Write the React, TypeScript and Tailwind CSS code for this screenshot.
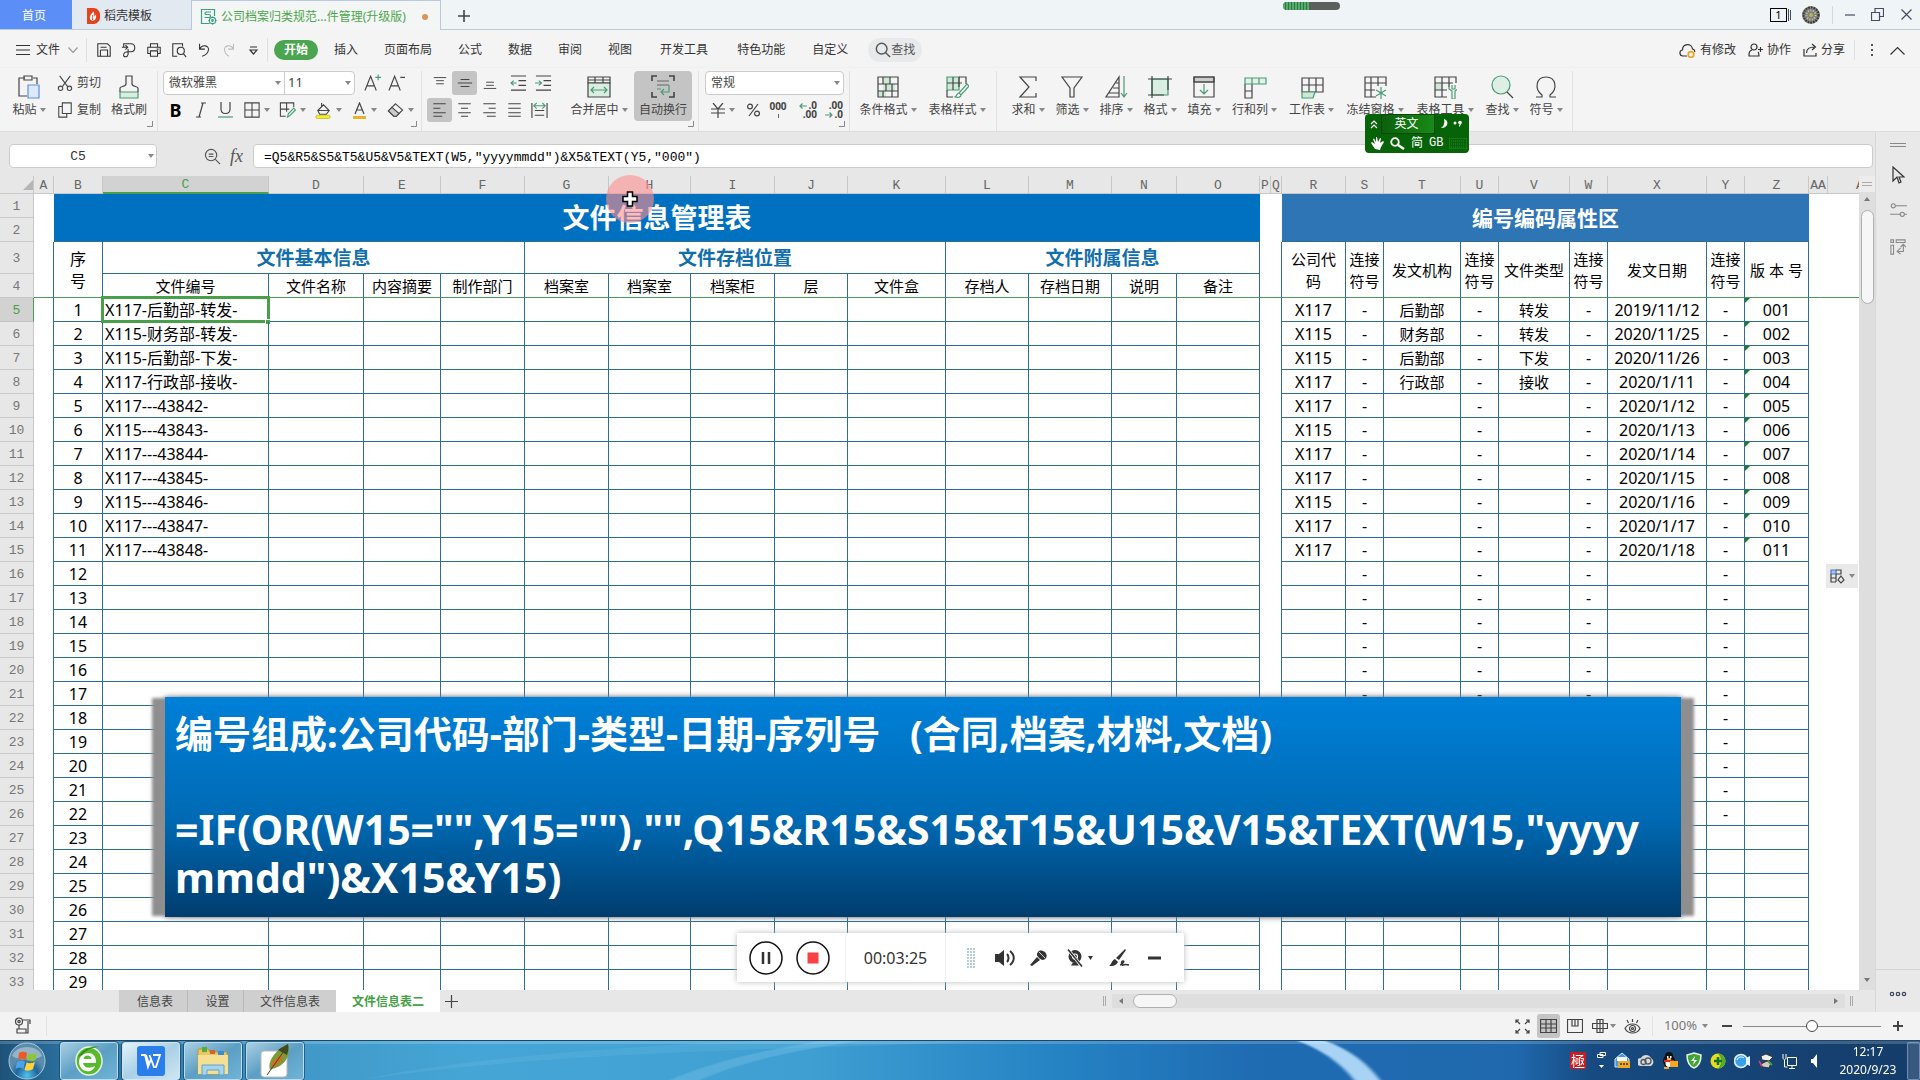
import React from 'react';

const columns = [
  { name: 'A', width: 20 },
  { name: 'B', width: 49 },
  { name: 'C', width: 166 },
  { name: 'D', width: 95 },
  { name: 'E', width: 77 },
  { name: 'F', width: 84 },
  { name: 'G', width: 84 },
  { name: 'H', width: 82 },
  { name: 'I', width: 84 },
  { name: 'J', width: 73 },
  { name: 'K', width: 98 },
  { name: 'L', width: 83 },
  { name: 'M', width: 83 },
  { name: 'N', width: 65 },
  { name: 'O', width: 83 },
  { name: 'P', width: 11 },
  { name: 'Q', width: 11 },
  { name: 'R', width: 64 },
  { name: 'S', width: 38 },
  { name: 'T', width: 77 },
  { name: 'U', width: 38 },
  { name: 'V', width: 71 },
  { name: 'W', width: 38 },
  { name: 'X', width: 99 },
  { name: 'Y', width: 38 },
  { name: 'Z', width: 64 },
  { name: 'AA', width: 19 },
];

const records = [
  { file: 'X117-后勤部-转发-', code: 'X117', dept: '后勤部', type: '转发', date: '2019/11/12', version: '001' },
  { file: 'X115-财务部-转发-', code: 'X115', dept: '财务部', type: '转发', date: '2020/11/25', version: '002' },
  { file: 'X115-后勤部-下发-', code: 'X115', dept: '后勤部', type: '下发', date: '2020/11/26', version: '003' },
  { file: 'X117-行政部-接收-', code: 'X117', dept: '行政部', type: '接收', date: '2020/1/11', version: '004' },
  { file: 'X117---43842-', code: 'X117', dept: '', type: '', date: '2020/1/12', version: '005' },
  { file: 'X115---43843-', code: 'X115', dept: '', type: '', date: '2020/1/13', version: '006' },
  { file: 'X117---43844-', code: 'X117', dept: '', type: '', date: '2020/1/14', version: '007' },
  { file: 'X117---43845-', code: 'X117', dept: '', type: '', date: '2020/1/15', version: '008' },
  { file: 'X115---43846-', code: 'X115', dept: '', type: '', date: '2020/1/16', version: '009' },
  { file: 'X117---43847-', code: 'X117', dept: '', type: '', date: '2020/1/17', version: '010' },
  { file: 'X117---43848-', code: 'X117', dept: '', type: '', date: '2020/1/18', version: '011' },
];

const subHeads = ['文件编号', '文件名称', '内容摘要', '制作部门', '档案室', '档案室', '档案柜', '层', '文件盒', '存档人', '存档日期', '说明', '备注'];
const codeHeads = ['公司代码', '连接符号', '发文机构', '连接符号', '文件类型', '连接符号', '发文日期', '连接符号', '版 本 号'];

const GREEN = '#4a9a76';

type IconProps = { w?: number; h?: number; box?: string; sw?: number; className?: string; children: React.ReactNode };

function Icon({ w = 18, h = 18, box = '0 0 18 18', sw = 1.2, className = '', children }: IconProps) {
  return (
    <svg width={w} height={h} viewBox={box} fill="none" stroke="currentColor" strokeWidth={sw} className={`shrink-0 ${className}`} aria-hidden="true">
      {children}
    </svg>
  );
}

function Caret() {
  return (
    <svg width="6" height="4" viewBox="0 0 6 4" className="shrink-0 text-[#888]" aria-hidden="true">
      <path d="M0 0h6L3 4z" fill="currentColor" />
    </svg>
  );
}

function Launcher() {
  return (
    <svg width="6" height="6" viewBox="0 0 6 6" className="absolute right-1 bottom-1 text-[#888]" aria-hidden="true">
      <path d="M5.500 0v5.500H0" stroke="currentColor" fill="none" />
    </svg>
  );
}

function TopTabs() {
  return (
    <header className="flex h-[30px] border-b border-[#b9cdd3] bg-[#eff4f6] text-xs">
      <button className="w-[72px] bg-[#5b8ff7] pt-[3px] pr-1 text-white">首页</button>
      <button className="flex w-[119px] items-center gap-1 bg-[#e3e9f1] pt-[3px] pl-[14px] text-[#333]">
        <svg width="14" height="16" viewBox="0 0 14 16" aria-hidden="true">
          <path d="M1 0h6a6.500 7 0 0 1 7 8 6.500 7 0 0 1-7 8H1z" fill="#e5431e" />
          <path d="M7.500 3.500c-3 2.500-4 5-3.500 7.500 1 2 4 2.500 5.500 0 1-2 .8-3.500.2-4.500-.6 1-1 1.500-1.700 1.700.4-1.700.3-3-.5-4.700z" fill="#fff" />
          <path d="M6.800 12c-1-2 0-3.500 0-5" stroke="#e5431e" fill="none" />
        </svg>
        稻壳模板
      </button>
      <div className="-mb-px flex w-[250px] items-center border-x border-t border-[#b9c8dd] bg-[#f4f5f5] pt-[2px] pl-[8px] text-[#4ca64c]">
        <Icon w={17} h={17} box="0 0 17 17" className="mr-1 text-[#35a27c]">
          <path d="M14.500 8V1.500h-13v14h8M11 4H6.500c-2 0-2 2.500 0 2.500h2.500c2 0 2 3 0 3H4.500" />
          <circle cx="12.500" cy="12.500" r="3.200" />
          <path d="M12.500 8.500v1M12.500 15.500v1M8.500 12.500h1M15.500 12.500h1" />
          <circle cx="12.500" cy="12.500" r=".8" />
        </Icon>
        <span className="whitespace-nowrap">公司档案归类规范...件管理(升级版)</span>
        <span className="mr-3 ml-auto size-[6px] rounded-full bg-[#dd9557]" />
      </div>
      <button aria-label="新建" className="ml-4 pt-[2px] text-[#444]">
        <Icon w={14} h={14} box="0 0 14 14" sw={1.6}><path d="M7 1v12M1 7h12" /></Icon>
      </button>
      <div className="ml-auto flex items-center pr-2 text-[#444c66]">
        <button aria-label="窗口数" className="mr-[11px] flex h-[14px] items-center gap-px">
          <span className="h-[14px] w-[17px] border border-current text-center text-[11px] leading-[12px] text-black">1</span>
          <span className="h-[12px] w-px bg-current" />
          <span className="h-[10px] w-px bg-current" />
        </button>
        <svg width="18" height="18" viewBox="0 0 18 18" className="mr-3" aria-hidden="true">
          <circle cx="9" cy="9" r="9" fill="#807f78" />
          <circle cx="9" cy="9" r="7.500" fill="none" stroke="#34342f" strokeWidth="2" strokeDasharray="1.500 1.200" />
          <circle cx="9" cy="9" r="4.500" fill="none" stroke="#c8c8bf" strokeWidth="2" strokeDasharray="1 1.500" />
          <circle cx="9" cy="9" r="2" fill="#b0b85a" />
        </svg>
        <span className="mr-3 h-[18px] w-px bg-[#d5d9da]" />
        <button aria-label="最小化" className="mr-4"><Icon w={10} h={12} box="0 0 10 12"><path d="M0 6h10" /></Icon></button>
        <button aria-label="还原" className="mr-[17px]"><Icon w={13} h={13} box="0 0 13 13"><path d="M.5 4.500h8v8h-8zM4 4.500v-4h8.500v8h-4" /></Icon></button>
        <button aria-label="关闭"><Icon w={11} h={11} box="0 0 11 11"><path d="M.5.5l10 10M10.500.5l-10 10" /></Icon></button>
      </div>
    </header>
  );
}

const menus = [
  { label: '插入', pad: 'px-[13px]' },
  { label: '页面布局', pad: 'px-[13px]' },
  { label: '公式', pad: 'px-[13px]' },
  { label: '数据', pad: 'px-[13px]' },
  { label: '审阅', pad: 'px-[13px]' },
  { label: '视图', pad: 'px-[13px]' },
  { label: '开发工具', pad: 'px-[15px]' },
  { label: '特色功能', pad: 'px-[14px]' },
  { label: '自定义', pad: 'px-[13px]' },
];

const quickIcons = [
  { label: '保存', draw: <path d="M2 2h11l3 3v11H2zM5 6h7M5 9h8v7M5 9v7" /> },
  { label: '输出为PDF', draw: <path d="M3 5.500V2h8c6 0 6 9 0 9H7M1 6h6M5 3.500L7.500 6 5 8.500M8 8v6c-1 4-6 3-5 0 .5-2 3-3 5-3" /> },
  { label: '打印', draw: <path d="M5 6V2h8v4M5 13H2V6h14v7h-3M5 10h8v6H5zM12 8h2" /> },
  { label: '打印预览', draw: <g><path d="M7 16H2V2h11v3" /><circle cx="11" cy="10" r="4" /><path d="M14 13l3 4" /></g> },
  { label: '撤销', draw: <path d="M4 2v6h6M4 8c3-6 11-4 10 1-.5 4-4 6-7 7" /> },
];

function MenuBar() {
  return (
    <nav className="flex h-[38px] items-center bg-[#f4f4f4] pt-[2px] pr-[15px] text-xs text-[#333]">
      <button className="flex items-center pl-4">
        <Icon w={14} h={12} box="0 0 14 12"><path d="M0 1.500h14M0 6h14M0 10.500h14" /></Icon>
        <span className="ml-[6px]">文件</span>
        <Icon w={10} h={6} box="0 0 10 6" className="ml-2 text-[#999]"><path d="M.5.5L5 5.500 9.500.5" /></Icon>
      </button>
      <span className="mr-1 ml-2 h-6 w-px bg-[#e0e0e0]" />
      {quickIcons.map((q) => (
        <button key={q.label} aria-label={q.label} className="flex w-[25px] justify-center"><Icon w={16} h={16}>{q.draw}</Icon></button>
      ))}
      <button aria-label="恢复" className="flex w-[25px] justify-center text-[#bbb]"><Icon w={16} h={16}><path d="M14 2v6H8M14 8C11 2 3 4 4 9c.5 4 3 6 5 7" /></Icon></button>
      <button aria-label="自定义快速访问" className="flex w-[25px] justify-center"><Icon w={9} h={9} box="0 0 9 9"><path d="M1 1h7M1 4l3.500 4L8 4z" /></Icon></button>
      <span className="mr-[6px] ml-px h-6 w-px bg-[#e0e0e0]" />
      <button className="mr-[3px] h-5 w-11 rounded-full bg-[#4ba54f] font-bold text-white">开始</button>
      {menus.map((m) => (
        <button key={m.label} className={m.pad}>{m.label}</button>
      ))}
      <button className="ml-[7px] flex h-6 items-center rounded-full bg-[#e7e9ea] px-[7px] text-[#555]">
        <Icon w={16} h={16} sw={1.6}><circle cx="7.500" cy="7.500" r="6" /><path d="M12 12l5 5" /></Icon>
        查找
      </button>
      <div className="ml-auto flex items-center">
        <button className="flex items-center gap-1">
          <Icon w={17} h={15} box="0 0 17 15">
            <path d="M8 13H4C0 13 0 7 3.500 7 3.500 0 13 0 13.500 6c2 .5 2.500 2 2 3" />
            <circle cx="12" cy="11.500" r="2.800" stroke="#eaa52b" strokeWidth="1.800" />
          </Icon>
          有修改
        </button>
        <button className="ml-3 flex items-center gap-1">
          <Icon w={15} h={14} box="0 0 15 14"><circle cx="6" cy="4" r="3" /><path d="M4 7c-3 1-3 3-3 6h10c0-2 0-3-1-4M10 6.500h5M12.500 4v5" /></Icon>
          协作
        </button>
        <button className="ml-3 flex items-center gap-1">
          <Icon w={14} h={14} box="0 0 14 14"><path d="M1 6v7h12v-3M3.500 10c0-4 3-6 8-6M9 1l3.500 3L9 7" /></Icon>
          分享
        </button>
        <span className="mx-[9px] h-5 w-px bg-[#e0e0e0]" />
        <button aria-label="更多" className="mx-[7px]"><svg width="3" height="13" fill="#555"><path d="M0 0h2v2H0zM0 5h2v2H0zM0 10h2v2H0z" /></svg></button>
        <button aria-label="收起功能区" className="ml-[9px]"><Icon w={15} h={9} box="0 0 15 9"><path d="M.5 8.500l7-7 7 7" /></Icon></button>
      </div>
    </nav>
  );
}

function Big({ label, width, icon, active }: { label: string; width: string; icon: React.ReactNode; active?: boolean }) {
  return (
    <button className={`flex h-[50px] flex-col items-center pt-1 ${width} ${active ? 'rounded bg-[#c4c4c4]' : ''}`}>
      <Icon w={24} h={24} box="0 0 24 24">{icon}</Icon>
      <span className="mt-[3px] flex items-center gap-[3px] leading-4 whitespace-nowrap">{label}{!active && <Caret />}</span>
    </button>
  );
}

function Small({ label, children, caret, active, w = 'w-[25px]' }: { label: string; children: React.ReactNode; caret?: boolean; active?: boolean; w?: string }) {
  return (
    <button aria-label={label} className={`flex h-6 items-center justify-center gap-1 ${w} ${active ? 'rounded-[3px] bg-[#c4c4c4]' : ''}`}>
      {children}
      {caret && <Caret />}
    </button>
  );
}

function Decimals({ label, top, bottom, shift }: { label: string; top: string; bottom: string; shift: 'left' | 'right' }) {
  const arrow = (
    <Icon w={8} h={6} box="0 0 8 6">
      <path d={shift === 'left' ? 'M8 3H1M3.500.5L1 3l2.500 2.500' : 'M0 3h7M4.500.5L7 3 4.500 5.500'} stroke={GREEN} />
    </Icon>
  );
  return (
    <button aria-label={label} className="flex w-[26px] flex-col items-end text-[10px] leading-[9px] font-bold">
      <span className="flex h-[9px] items-center gap-px">{shift === 'left' && arrow}{top}</span>
      <span className="flex h-[9px] items-center gap-px">{shift === 'right' && arrow}{bottom}</span>
    </button>
  );
}

const tools = [
  { label: '求和', width: 'w-11', icon: <path d="M20 6V2H4l9 10-9 10h16v-4" /> },
  { label: '筛选', width: 'w-11', icon: <path d="M2 2h20l-8 11v9h-4v-9z" /> },
  { label: '排序', width: 'w-11', icon: <g><path d="M15 2v20H2zM12 8h3M9 13h6M5 18h10" /><path d="M20 1v21M17 18l3 4 3-4" stroke={GREEN} /></g> },
  { label: '格式', width: 'w-11', icon: <g><path d="M4 4h16v16H4z" fill="#d9eee0" stroke={GREEN} /><path d="M0 4h24M4 1v22M20 1v14M0 20h16" /></g> },
  { label: '填充', width: 'w-11', icon: <g><path d="M2 2h20v5H2z" fill="#ccc" /><path d="M2 2h20v20H2zM2 7h20" /><path d="M12 9v10M8 15l4 4 4-4" stroke={GREEN} /></g> },
  { label: '行和列', width: 'w-[57px]', icon: <g><path d="M2 9v14h7V9M2 16h7" /><path d="M2 3h21v6H2zM9 3v6M16 3v6" stroke={GREEN} fill="#e2f2e8" /></g> },
  { label: '工作表', width: 'w-[57px]', icon: <g><path d="M2 3h21v14H2zM9 3v14M16 3v14M2 10h21" /><path d="M2 17h13l-2 6H2z" stroke={GREEN} fill="#cfe8d8" /></g> },
  { label: '冻结窗格', width: 'w-[70px]', icon: <g><path d="M23 11V2H2v20h11M8 2v20M15 2v9M2 8h21M2 15h10" /><path d="M18 12v12M13 15l10 6M23 15l-10 6" stroke={GREEN} /></g> },
  { label: '表格工具', width: 'w-[70px]', icon: <g><path d="M2 9h8v6H2z" fill="#cfe8d8" stroke="none" /><path d="M23 8V2H2v20h12M9 2v20M16 2v10M2 8h18M2 15h12" /><path d="M16 10v4l3 2v8h3v-8l3-2v-4M19 10v4h3v-4" stroke={GREEN} /></g> },
  { label: '查找', width: 'w-11', icon: <g><circle cx="11" cy="10" r="9" fill="#deeee4" stroke={GREEN} /><path d="M17 17l6 6" /></g> },
  { label: '符号', width: 'w-11', icon: <path d="M2 22h6v-2C0 14 2 2 12 2s12 12 4 18v2h6" /> },
];

const hAligns = [
  { label: '左对齐', d: 'M1 2h14M1 7h8M1 12h14M1 16h10', active: true },
  { label: '居中', d: 'M1 2h14M4 7h8M1 12h14M4 16h8' },
  { label: '右对齐', d: 'M1 2h14M7 7h8M1 12h14M5 16h10' },
  { label: '两端对齐', d: 'M1 2h14M1 7h14M1 12h14M1 16h14' },
];

function Ribbon() {
  return (
    <div className="flex h-16 border-b border-[#dcdcdc] bg-[#f4f4f4] pt-[3px] text-xs text-[#444] shadow-sm">
      <div className="relative flex w-[158px] border-r border-[#e2e2e2] pl-[7px]">
        <Big label="粘贴" width="w-11" icon={<g><path d="M8 3H2v18h8M16 3h4v6M7 1h8v4H7z" /><path d="M11 10h11v13H11z" fill="#dbe9fb" stroke="#5b8fd6" /></g>} />
        <div className="flex w-[54px] flex-col gap-[3px] pl-[6px]">
          <button className="flex h-6 items-center gap-1 whitespace-nowrap">
            <Icon w={16} h={18}><path d="M3 1l9 12M15 1L6 13" /><circle cx="4" cy="15" r="2.500" /><circle cx="14" cy="15" r="2.500" /></Icon>
            剪切
          </button>
          <button className="flex h-6 items-center gap-1 whitespace-nowrap">
            <Icon w={16} h={18}><path d="M6 1h10v12H6zM6 5H2v12h9v-4" /></Icon>
            复制
          </button>
        </div>
        <button className="flex h-[50px] w-[48px] flex-col items-center pt-1">
          <Icon w={24} h={24} box="0 0 24 24"><path d="M3 17h18v6H3z" fill="#d9eee0" stroke={GREEN} /><path d="M3 17v-4c0-2 6-1 6-4V1h6v8c0 3 6 2 6 4v4" /></Icon>
          <span className="mt-[3px] leading-4 whitespace-nowrap">格式刷</span>
        </button>
        <Launcher />
      </div>

      <div className="relative w-[264px] border-r border-[#e2e2e2] pl-[5px]">
        <div className="flex items-center">
          <div className="flex h-6 w-[192px] rounded border border-[#ccc] bg-white">
            <label className="relative flex w-[121px] items-center border-r border-[#ccc]">
              <select aria-label="字体" className="w-full appearance-none bg-transparent pl-[5px] outline-none"><option>微软雅黑</option></select>
              <span className="pointer-events-none absolute right-[3px]"><Caret /></span>
            </label>
            <label className="relative flex flex-1 items-center">
              <select aria-label="字号" className="w-full appearance-none bg-transparent pl-[3px] text-[13px] outline-none"><option>11</option></select>
              <span className="pointer-events-none absolute right-[3px]"><Caret /></span>
            </label>
          </div>
          <Small label="增大字号" w="ml-[5px] w-6"><Icon w={17} h={18}><path d="M1 17L7 2l6 15M3 12h8" /><path d="M12 3h6M15 0v6" stroke={GREEN} /></Icon></Small>
          <Small label="减小字号" w="w-6"><Icon w={17} h={18}><path d="M1 17L7 2l6 15M3 12h8M13 3h5" /></Icon></Small>
        </div>
        <div className="mt-[3px] flex items-center">
          <Small label="加粗"><span className="text-[18px] font-bold text-black">B</span></Small>
          <Small label="倾斜"><Icon w={12} h={16} box="0 0 12 16"><path d="M8 1L4 15M6 1h5M1 15h5" /></Icon></Small>
          <Small label="下划线"><Icon w={15} h={16} box="0 0 15 16"><path d="M3 0v7c0 6 9 6 9 0V0" /><path d="M0 15h15" stroke={GREEN} /></Icon></Small>
          <Small label="边框" caret w="w-[37px]"><Icon w={16} h={16}><path d="M1 1h16v16H1zM9 1v16M1 9h16" /></Icon></Small>
          <Small label="绘图边框" caret w="w-[34px]"><Icon w={17} h={16}><path d="M16 6V1H1v15h6M8 1v10M1 8h10" /><path d="M9 17l1-4 6-6 2 2-6 6z" stroke={GREEN} fill="#d9eee0" /></Icon></Small>
          <Small label="填充颜色" caret w="w-[38px]"><Icon w={17} h={17}><path d="M7 1v4M3 9l6-6 6 6-3 4H5zM3 9h12" /><rect x="1" y="14" width="15" height="3.500" rx="1.500" fill="#f6ee20" stroke="#a9a420" strokeWidth=".6" /></Icon></Small>
          <Small label="字体颜色" caret w="w-[34px]"><Icon w={15} h={17} box="0 0 15 17"><path d="M3 12L7.500 1 12 12M5 8h5" /><path d="M1 15.500h13" stroke="#e9b22d" strokeWidth="3" /></Icon></Small>
          <Small label="清除" caret w="w-[38px]"><Icon w={17} h={16}><path d="M9 2l8 7-7 7H7L1 10z" /><path d="M5 6l8 7-3 3H7L1 10z" fill="#ccc" /></Icon></Small>
        </div>
        <Launcher />
      </div>

      <div className="relative flex w-[277px] border-r border-[#e2e2e2] pl-[5px]">
        <div className="w-[137px]">
          <div className="flex items-center">
            <Small label="顶端对齐"><Icon w={14} h={18}><path d="M1 2h16M4 6h10M4 10h10" /></Icon></Small>
            <Small label="垂直居中" active><Icon w={16} h={18}><path d="M4 5h10M1 9h16M4 13h10" /></Icon></Small>
            <Small label="底端对齐"><Icon w={14} h={18}><path d="M4 8h10M4 12h10M1 16h16" /></Icon></Small>
            <Small label="减少缩进" w="ml-1 w-[25px]"><Icon w={17} h={17}><path d="M1 1h16M9 6h8M9 11h8M1 16h16" /><path d="M7 8.500H1M4 6L1 8.500 4 11" stroke={GREEN} /></Icon></Small>
            <Small label="增加缩进"><Icon w={17} h={17}><path d="M1 1h16M9 6h8M9 11h8M1 16h16" /><path d="M0 8.500h6M4 6l3 2.500L4 11" stroke={GREEN} /></Icon></Small>
          </div>
          <div className="mt-[3px] flex items-center">
            {hAligns.map((a) => (
              <Small key={a.label} label={a.label} active={a.active}><Icon w={15} h={16} box="0 0 16 18"><path d={a.d} /></Icon></Small>
            ))}
            <Small label="分散对齐"><Icon w={17} h={17}><path d="M1 1v16M17 1v16M4 9h10M4 14h10" /><path d="M4 4h10M6 1L3 4l3 3M12 1l3 3-3 3" stroke={GREEN} /></Icon></Small>
          </div>
        </div>
        <Big label="合并居中" width="w-[70px]" icon={<g><path d="M1 2h22v6H1zM1 5h22M8 2v6M16 2v6" /><path d="M1 8h22v14H1z" fill="#d9eee0" /><path d="M4 15h16M7 12l-3 3 3 3M17 12l3 3-3 3" stroke={GREEN} /></g>} />
        <Big label="自动换行" width="w-[58px]" active icon={<g><path d="M1 6V1h5M18 1h5v5M1 17v5h5M18 22h5v-5" strokeWidth="1.600" /><path d="M6 6h12M6 10h12" stroke="#666" /><path d="M6 14h4M18 10v7h-7M13 14l-3 3 3 3" stroke={GREEN} /></g>} />
        <Launcher />
      </div>

      <div className="relative w-[151px] border-r border-[#e2e2e2] pl-[6px]">
        <label className="relative flex h-6 w-[139px] items-center rounded border border-[#ccc] bg-white">
          <select aria-label="数字格式" className="w-full appearance-none bg-transparent pl-[5px] outline-none"><option>常规</option></select>
          <span className="pointer-events-none absolute right-[3px]"><Caret /></span>
        </label>
        <div className="mt-[3px] flex h-6 items-center">
          <Small label="货币" caret w="w-9"><Icon w={14} h={15} box="0 0 14 15"><path d="M2 0l5 6 5-6M0 6h14M0 10h14M7 6v9" /></Icon></Small>
          <Small label="百分比" w="w-6"><Icon w={13} h={14} box="0 0 13 14"><circle cx="3" cy="3.500" r="2.400" /><circle cx="10" cy="10.500" r="2.400" /><path d="M11 1L2 13" /></Icon></Small>
          <button className="flex w-[26px] flex-col items-center gap-[3px] text-[10px] leading-[9px] font-bold">000<span className="h-1 w-px bg-[#666]" /></button>
          <Decimals label="增加小数位数" top=".0" bottom=".00" shift="left" />
          <Decimals label="减少小数位数" top=".00" bottom=".0" shift="right" />
        </div>
        <Launcher />
      </div>

      <div className="flex w-[147px] border-r border-[#e2e2e2] pl-[3px]">
        <Big label="条件格式" width="w-[70px]" icon={<g><path d="M7 2h7v7H7zM7 9h12v7H7zM2 16h8v6H2z" fill="#cfe8d8" stroke="none" /><path d="M2 2h20v20H2zM2 9h20M2 16h20M7 2v7M14 2v7M10 9v7M16 9v13M7 16v6" /></g>} />
        <Big label="表格样式" width="w-[68px]" icon={<g><path d="M2 2h12v13H2z" fill="#cfe8d8" stroke={GREEN} /><path d="M21 9V2H14M2 15v7h6M2 8h15M8 2v13M14 2v10" /><path d="M22 9l2 2-8 9-2-2zM14 18c-2 0-2 3-4 4 3 1 6 0 6-2" stroke={GREEN} fill="#fff" /></g>} />
      </div>

      <div className="flex border-r border-[#e2e2e2] pr-1 pl-[9px]">
        {tools.map((t) => (
          <Big key={t.label} label={t.label} width={t.width} icon={t.icon} />
        ))}
      </div>
    </div>
  );
}

function FormulaBar() {
  return (
    <div className="flex h-11 items-center bg-[#e7e7e7] pt-1 pr-[2px] pl-[9px] text-xs">
      <label className="relative flex h-6 w-[148px] items-center rounded border border-[#ccc] bg-white">
        <input aria-label="名称框" defaultValue="C5" className="w-[136px] bg-transparent pt-[2px] text-center font-['Liberation_Mono',monospace] text-[13px] text-[#333] outline-none" />
        <span className="absolute right-[2px]"><Caret /></span>
      </label>
      <div className="flex w-[96px] items-center justify-end gap-[9px] pr-[10px] text-[#555]">
        <Icon w={17} h={17}><circle cx="7.500" cy="7.500" r="6" /><path d="M12 12l5 5M5 6.500h5M5 9h5" /></Icon>
        <span className="font-['Liberation_Serif',serif] text-[18px] leading-5 italic">fx</span>
      </div>
      <input
        aria-label="编辑栏"
        defaultValue={'=Q5&R5&S5&T5&U5&V5&TEXT(W5,"yyyymmdd")&X5&TEXT(Y5,"000")'}
        className="h-6 min-w-0 flex-1 rounded border border-[#ccc] bg-white px-[10px] pt-[2px] font-['Liberation_Mono',monospace] text-[13px] text-black outline-none"
      />
    </div>
  );
}

function RowHead({ n }: { n: number }) {
  const selected = n === 5;
  return (
    <th
      scope="row"
      className={`border-r border-b pt-[2px] font-['Liberation_Mono',monospace] text-[13px] leading-5 font-normal ${
        selected ? 'border-r-[#4a9f4a] border-b-[#c4c4c4] bg-[#d2d2d2] text-[#4a9f4a]' : 'border-[#c8c8c8] bg-[#e7e7e7] text-[#777]'
      }`}
    >
      {n}
    </th>
  );
}

// vertical rules sit on the right edge of each cell, so Q carries the left rule of the second block
const line = 'border-r border-b border-[#2f6e94]';
const frozen = 'border-r border-b border-r-[#2f6e94] border-b-[#4f9a5a]';

function DataRow({ index }: { index: number }) {
  const record = records[index];
  const dash = index < 22 ? '-' : '';
  return (
    <tr className="h-6 text-base leading-[22px]">
      <RowHead n={index + 5} />
      <td className="border-r border-[#2f6e94]" />
      <td className={line}>{index + 1}</td>
      <td className={`relative pl-[2px] text-left whitespace-nowrap ${line}`}>
        {record?.file}
        {index === 0 && (
          <div className="absolute -inset-x-[2px] -top-[2px] -bottom-[2px] border-[3px] border-[#4a9f4a]">
            <span className="absolute -right-[3px] -bottom-[4px] size-[5px] border-t border-l border-white bg-[#4a9f4a]" />
          </div>
        )}
      </td>
      {columns.slice(3, 15).map((c) => <td key={c.name} className={line} />)}
      <td />
      <td className="border-r border-[#2f6e94]" />
      <td className={line}>{record?.code}</td>
      <td className={line}>{dash}</td>
      <td className={`text-[15px] ${line}`}>{record?.dept}</td>
      <td className={line}>{dash}</td>
      <td className={`text-[15px] ${line}`}>{record?.type}</td>
      <td className={line}>{dash}</td>
      <td className={line}>{record?.date}</td>
      <td className={line}>{dash}</td>
      <td className={`relative ${line}`}>
        {record?.version}
        {record && <span className="absolute top-0 left-0 border-t-[5px] border-r-[5px] border-t-[#1b7a2b] border-r-transparent" />}
      </td>
      <td />
      <td />
    </tr>
  );
}

function Sheet() {
  return (
    <table className="w-full table-fixed border-separate border-spacing-0 text-center text-[15px] text-black">
      <colgroup>
        <col className="w-[34px]" />
        {columns.map((c) => <col key={c.name} style={{ width: c.width }} />)}
        <col />
      </colgroup>
      <thead>
        <tr className="h-[18px] bg-[#e7e7e7] font-['Liberation_Mono',monospace] text-[13px] leading-[14px] text-[#666]">
          <td className="border-r border-b border-[#c8c8c8]">
            <svg width="10" height="10" className="ml-auto" aria-hidden="true"><path d="M10 0v10H0z" fill="#b5b5b5" /></svg>
          </td>
          {columns.map((c) => (
            <th
              key={c.name}
              scope="col"
              className={`border-r font-normal ${c.name === 'C' ? 'border-r-[#c8c8c8] border-b-2 border-b-[#4a9f4a] bg-[#d2d2d2] pt-[2px] text-[#4a9f4a]' : 'border-b border-[#c8c8c8] pt-[3px]'}`}
            >
              {c.name}
            </th>
          ))}
          <th scope="col" className="overflow-hidden border-b border-[#c8c8c8] pt-[3px] pl-7 text-left font-normal whitespace-nowrap">AB</th>
        </tr>
      </thead>
      <tbody>
        <tr className="h-6">
          <RowHead n={1} />
          <td />
          <td colSpan={14} rowSpan={2} className="border-b border-[#2f6e94] bg-[#0070c0] text-[27px] leading-9 font-bold text-white">文件信息管理表</td>
          <td /><td />
          <td colSpan={9} rowSpan={2} className="border-b border-[#2f6e94] bg-[#2e75b6] text-[21px] leading-8 font-bold text-white">编号编码属性区</td>
          <td /><td />
        </tr>
        <tr className="h-6"><RowHead n={2} /><td /><td /><td /><td /><td /></tr>
        <tr className="h-8">
          <RowHead n={3} />
          <td className="border-r border-[#2f6e94]" />
          <td rowSpan={2} className={`px-4 text-base leading-[22px] ${frozen}`}>序号</td>
          <td colSpan={4} className={`text-[19px] leading-[30px] font-bold text-[#126eab] ${line}`}>文件基本信息</td>
          <td colSpan={5} className={`text-[19px] leading-[30px] font-bold text-[#126eab] ${line}`}>文件存档位置</td>
          <td colSpan={4} className={`text-[19px] leading-[30px] font-bold text-[#126eab] ${line}`}>文件附属信息</td>
          <td />
          <td className="border-r border-[#2f6e94]" />
          {codeHeads.map((h, i) => (
            <td key={i} rowSpan={2} className={`px-[3px] leading-[22px] ${frozen}`}>{h}</td>
          ))}
          <td /><td />
        </tr>
        <tr className="h-6 leading-[22px]">
          <RowHead n={4} />
          <td className={frozen} />
          {subHeads.map((h, i) => <td key={i} className={frozen}>{h}</td>)}
          <td className="border-b border-[#4f9a5a]" />
          <td className={frozen} />
          <td className="border-b border-[#4f9a5a]" />
          <td className="border-b border-[#4f9a5a]" />
        </tr>
        {Array.from({ length: 29 }, (_, i) => <DataRow key={i} index={i} />)}
      </tbody>
    </table>
  );
}

function Banner() {
  return (
    <div className="absolute top-[521px] right-[194px] left-[165px] bg-linear-to-b from-[#0080d8] via-[#006ab4] via-55% to-[#003d6e] px-[10px] pt-3 pb-4 leading-[48px] font-bold whitespace-nowrap text-white shadow-[-14px_0_3px_-1px_#8e8e8e,14px_0_3px_-1px_#8e8e8e,0_0_6px_#777]">
      <p className="text-[38px]">编号组成:公司代码-部门-类型-日期-序列号&nbsp;&nbsp; (合同,档案,材料,文档)</p>
      <p className="mt-12 text-[41px]">
        =IF(OR(W15="",Y15=""),"",Q15&amp;R15&amp;S15&amp;T15&amp;U15&amp;V15&amp;TEXT(W15,"yyyy
        <br />
        mmdd")&amp;X15&amp;Y15)
      </p>
    </div>
  );
}

function GridArea() {
  return (
    <div className="relative flex min-h-0 flex-1 overflow-hidden">
      <div className="min-w-0 flex-1 overflow-hidden bg-white"><Sheet /></div>
      <div className="flex w-4 flex-col items-center bg-[#dedede]">
        <div className="flex h-4 w-full flex-col items-center justify-center gap-[2px] bg-[#ececec]">
          <span className="h-px w-[10px] bg-[#aaa]" />
          <span className="h-px w-[10px] bg-[#aaa]" />
        </div>
        <svg width="6" height="4" className="mt-[5px]" aria-hidden="true"><path d="M0 4h6L3 0z" fill="#777" /></svg>
        <div className="mt-[9px] h-[94px] w-[13px] rounded-full border border-[#b0b0b0] bg-[#f6f6f6]" />
        <svg width="6" height="4" className="mt-auto mb-2" aria-hidden="true"><path d="M0 0h6L3 4z" fill="#777" /></svg>
      </div>
      <button aria-label="粘贴选项" className="absolute top-[388px] right-[17px] flex h-6 w-8 items-center justify-center gap-1 bg-[#e9e9e9] text-[#444]">
        <Icon w={15} h={15} box="0 0 15 15"><path d="M1 1h5v4H1z" fill="#a9c4ee" stroke="#4b78c4" /><path d="M6 1h5v4H6M1 5v8h5M1 9h5M6 5v8" /><path d="M11 7l3 4-3 3-3-3z" /></Icon>
        <Caret />
      </button>
      <Banner />
    </div>
  );
}

function SheetTabs() {
  return (
    <div className="flex h-[22px] items-stretch bg-[#e7e7e7] pl-[119px] text-xs text-[#444]">
      <button className="w-[69px] border-r border-[#b9b9b9] bg-[#cfcfcf] pt-px pl-1">信息表</button>
      <button className="w-14 border-r border-[#b9b9b9] bg-[#cfcfcf] pt-px pl-1">设置</button>
      <button className="w-[92px] bg-[#cfcfcf] pt-px">文件信息表</button>
      <button className="w-[104px] bg-white pt-px font-bold text-[#43a043]">文件信息表二</button>
      <button aria-label="新建工作表" className="ml-[5px] flex items-center"><Icon w={13} h={13} box="0 0 13 13"><path d="M6.500 0v13M0 6.500h13" /></Icon></button>
      <div className="ml-auto flex w-[772px] items-center">
        <span className="mr-[6px] h-[10px] w-[3px] border-x border-[#aaa]" />
        <div className="flex h-[14px] w-[733px] items-center bg-[#dedede] px-[7px]">
          <svg width="4" height="6" aria-hidden="true"><path d="M4 0v6L0 3z" fill="#777" /></svg>
          <div className="ml-[10px] h-[14px] w-11 rounded-full border border-[#b0b0b0] bg-[#f6f6f6]" />
          <svg width="4" height="6" className="ml-auto" aria-hidden="true"><path d="M0 0v6l4-3z" fill="#777" /></svg>
        </div>
        <span className="ml-[5px] h-[10px] w-[3px] border-x border-[#aaa]" />
      </div>
    </div>
  );
}

function SidePanel() {
  return (
    <aside className="flex w-[45px] flex-col items-center border-l border-[#d8d8d8] bg-[#e9e9e9] text-[#888]">
      <Icon w={16} h={6} box="0 0 16 6" className="mt-[10px]" sw={1}><path d="M0 1.500h16M0 4.500h16" /></Icon>
      <button aria-label="选择" className="mt-[18px] text-[#333]"><Icon w={14} h={18} box="0 0 14 18"><path d="M2 1v14l4-4 2 6 2-1-2-5h5z" /></Icon></button>
      <button aria-label="设置" className="mt-[18px]"><Icon w={17} h={17}><path d="M6 4h12M0 13h11M15 13h3" /><circle cx="3.500" cy="4" r="2.200" /><circle cx="13" cy="13" r="2.200" /></Icon></button>
      <button aria-label="替换" className="mt-5"><Icon w={16} h={16}><path d="M1 1h3v3H1zM1 7h3v10H1zM7 1h10v3H7zM15 7v7H9M12 10l-4 4 4 3M12 9l3-3 3 3" /></Icon></button>
      <div className="mt-auto flex h-[43px] w-full items-center justify-center border-t border-[#d3d3d3] pt-[5px] text-[#3c4560]">
        <Icon w={18} h={6} box="0 0 18 6"><circle cx="3" cy="3" r="1.700" /><circle cx="9" cy="3" r="1.700" /><circle cx="15" cy="3" r="1.700" /></Icon>
      </div>
    </aside>
  );
}

function StatusBar() {
  return (
    <footer className="flex h-7 items-center bg-[#f3f3f3] pr-[17px] pl-[14px] text-[#444]">
      <Icon w={18} h={18}><circle cx="5" cy="4.500" r="3.500" /><circle cx="5" cy="4.500" r="1.200" /><path d="M9 3h7v4M14 4v12H3v-4h9v4M5 8v4" /></Icon>
      <span className="ml-[14px] h-5 w-px bg-[#e2e2e2]" />
      <div className="ml-auto flex items-center">
        <button aria-label="全屏" className="mr-[7px]"><Icon w={15} h={15} box="0 0 15 15"><path d="M5 5L1 1M1 4V1h3M10 5l4-4M11 1h3v3M5 10l-4 4M1 11v3h3M10 10l4 4M14 11v3h-3" /></Icon></button>
        <button aria-label="普通视图" className="mr-[7px] flex h-6 w-[23px] items-center justify-center rounded-[3px] bg-[#c4c4c4]"><Icon w={17} h={14} box="0 0 17 14"><path d="M.5.5h16v13H.5zM.5 5h16M.5 9h16M6 .5v13M11 .5v13" /></Icon></button>
        <button aria-label="页面布局" className="mr-[9px]"><Icon w={16} h={14} box="0 0 16 14"><path d="M.5.5h15v13H.5zM5 .5V7h6V.5M8 .5V7" /></Icon></button>
        <button aria-label="分页预览" className="mr-2 flex items-center gap-[2px]"><Icon w={16} h={14} box="0 0 16 14"><path d="M5 .5h6v13H5zM.5 4.500h15v5H.5zM8 .5v13" /></Icon><Caret /></button>
        <button aria-label="阅读模式"><Icon w={17} h={15} box="0 0 17 15"><path d="M1 9.500c3-6 12-6 15 0-3 6-12 6-15 0z" /><circle cx="8.500" cy="9.500" r="3" /><circle cx="8.500" cy="9.500" r="1" /><path d="M8.500 0v3M3 1l1.500 3M14 1l-1.500 3" /></Icon></button>
        <span className="mx-[11px] h-5 w-px bg-[#e2e2e2]" />
        <button className="flex items-center gap-[5px] text-[13px] text-[#777]">100%<Caret /></button>
        <button aria-label="缩小" className="mr-[11px] ml-[14px]"><Icon w={10} h={10} box="0 0 10 10" sw={2}><path d="M0 5h10" /></Icon></button>
        <input
          type="range"
          aria-label="缩放比例"
          defaultValue={50}
          className="h-4 w-[138px] appearance-none bg-transparent [&::-webkit-slider-runnable-track]:h-px [&::-webkit-slider-runnable-track]:bg-[#888] [&::-webkit-slider-thumb]:-mt-[6px] [&::-webkit-slider-thumb]:size-[12px] [&::-webkit-slider-thumb]:appearance-none [&::-webkit-slider-thumb]:rounded-full [&::-webkit-slider-thumb]:border [&::-webkit-slider-thumb]:border-[#444] [&::-webkit-slider-thumb]:bg-white"
        />
        <button aria-label="放大" className="ml-3"><Icon w={10} h={10} box="0 0 10 10" sw={2}><path d="M0 5h10M5 0v10" /></Icon></button>
      </div>
    </footer>
  );
}

function TaskButton({ label, bright, children }: { label: string; bright?: boolean; children: React.ReactNode }) {
  return (
    <button
      aria-label={label}
      className={`mr-1 flex h-[38px] w-[58px] items-center justify-center rounded-[3px] border border-[#cfe6f5]/80 bg-linear-to-br outline outline-[#0f3a5c]/60 ${
        bright ? 'from-[#e6f2f8] via-[#a9d0e6] to-[#cfe6f2]' : 'from-[#a9cfe2] via-[#5c9fc4] to-[#6fb4d8]'
      }`}
    >
      {children}
    </button>
  );
}

function Taskbar() {
  return (
    <div className="relative flex h-10 items-center overflow-hidden border-t border-[#17496d] bg-[#1f74bb] text-white">
      <svg className="absolute inset-0 size-full" viewBox="0 0 1920 40" preserveAspectRatio="none" aria-hidden="true">
        <defs>
          <linearGradient id="sky">
            <stop offset="0" stopColor="#1d5279" />
            <stop offset=".03" stopColor="#2a6e9b" />
            <stop offset=".16" stopColor="#4199c9" />
            <stop offset=".25" stopColor="#45a6d6" />
            <stop offset=".42" stopColor="#3f9fd2" />
            <stop offset=".55" stopColor="#2583c4" />
            <stop offset=".65" stopColor="#1f6cb3" />
            <stop offset=".79" stopColor="#1f68ad" />
            <stop offset=".83" stopColor="#174a80" />
            <stop offset="1" stopColor="#153c69" />
          </linearGradient>
          <filter id="soft"><feGaussianBlur stdDeviation="2 .5" /></filter>
        </defs>
        <path d="M0 0h1920v40H0z" fill="url(#sky)" />
        <g filter="url(#soft)">
          <path d="M360 40c200-30 400-30 640-40H760C600 6 450 20 360 40z" fill="#7cc4e8" opacity=".2" />
          <path d="M700 40c40-18 90-30 160-40h-40c-60 10-110 22-150 40z" fill="#8bcdee" opacity=".3" />
          <path d="M1298 0c22 8 42 22 56 40h26c-12-16-28-30-54-40z" fill="#a9d3f5" />
        </g>
        <path d="M0 0h1920v3H0z" fill="#fff" opacity=".18" />
      </svg>
      <div className="relative flex w-full items-center pl-2">
        <button aria-label="开始菜单" className="mr-[14px]">
          <svg width="38" height="38" viewBox="0 0 38 38" aria-hidden="true">
            <defs><radialGradient id="orb" cy=".9"><stop offset="0" stopColor="#4fc3ee" /><stop offset=".6" stopColor="#1f6699" /><stop offset="1" stopColor="#5c8cab" /></radialGradient></defs>
            <circle cx="19" cy="19" r="18" fill="url(#orb)" stroke="#a9cbdf" />
            <path d="M4 14C8 2 30 2 34 14c-8 5-22 5-30 0z" fill="#fff" opacity=".35" />
            <path d="M11 11c3-2 6-1 8 0l-1 7c-3-1-5-2-8 0z" fill="#ee5a24" />
            <path d="M20 11.500c3 1 6 1 9-1L27.500 18c-3 2-6 1-8.500 0z" fill="#8cc63f" />
            <path d="M9 20c3-2 6-1 8 0l-1.500 7c-2-1-5-2-8 0z" fill="#4aa3e8" />
            <path d="M18.500 20.500c3 1 5 1 8.500-.5L25 27c-3 2-6 2-8.500 1z" fill="#ffd23c" />
          </svg>
        </button>
        <TaskButton label="浏览器">
          <svg width="30" height="32" viewBox="0 0 30 32" aria-hidden="true">
            <ellipse cx="15" cy="16" rx="13" ry="14" fill="#58b92c" stroke="#e7f6dd" strokeWidth="1.500" />
            <path d="M22 18H9c.5 5 7 6 12 3-1 4-5 6-9 5-5-1-7-5-7-10 1-10 18-12 17 2zM9.500 14h8c0-4-7-5-8 0z" fill="#fff" />
            <path d="M4 12C9 3 20 0 26 2c-6 0-13 2-18 8z" fill="#2f8f20" />
          </svg>
        </TaskButton>
        <TaskButton label="WPS" bright>
          <svg width="28" height="30" viewBox="0 0 28 30" aria-hidden="true">
            <rect width="28" height="30" rx="3" fill="#2b7de9" />
            <path d="M4 9h4l3 12 3-8 3 8h2l4-12h-7M9 9l3 9M14 13l-1.500-4" fill="none" stroke="#fff" strokeWidth="1.800" />
          </svg>
        </TaskButton>
        <TaskButton label="资源管理器">
          <svg width="34" height="30" viewBox="0 0 34 30" aria-hidden="true">
            <path d="M2 3h10l2 3h17v22H2z" fill="#e6c763" stroke="#b89a3a" />
            <path d="M6 1h5v5H6z" fill="#5aa93c" /><path d="M14 4h5v4h-5z" fill="#d4603a" /><path d="M22 5h6v4h-6z" fill="#3c8ad4" />
            <path d="M2 9h30v19H2z" fill="#f5df93" />
            <path d="M6 29V19h22v10h-5v-5H11v5z" fill="#a6d4ee" stroke="#5fa3c8" />
          </svg>
        </TaskButton>
        <TaskButton label="画图">
          <svg width="30" height="34" viewBox="0 0 30 34" aria-hidden="true">
            <rect x="1" y="7" width="26" height="26" rx="3" fill="#fff" stroke="#bbb" />
            <path d="M10 26c-3-8 5-20 18-26 3 10-2 22-16 25z" fill="#7c9a35" />
            <path d="M11 22c2-6 6-9 12-10-2 6-6 9-10 11z" fill="#d9692b" />
            <path d="M18 6c4-3 7-4 10-6 1 4 0 8-1 11z" fill="#3f4a1e" />
            <path d="M7 31L24 7" stroke="#5b3a1a" fill="none" />
          </svg>
        </TaskButton>

        <div className="ml-auto flex items-center">
          <span className="mr-[11px] flex h-[17px] w-4 items-center justify-center bg-[#c51f26] text-[14px] leading-4">極</span>
          <svg width="9" height="18" viewBox="0 0 9 18" className="mr-2" aria-hidden="true"><path d="M3 .5h5.500v3H3zM.5 2.500H6v3H.5z" fill="#17457a" stroke="#fff" /><path d="M2 13h5l-2.500 3z" fill="#fff" /></svg>
          <div className="flex items-center gap-2">
            <svg width="16" height="17" viewBox="0 0 16 17" aria-hidden="true"><path d="M1 7l7-6 7 6v8H1z" fill="#3a9ce8" stroke="#cfe6f8" /><path d="M3 5h10v4H3z" fill="#fff" /><path d="M4 9h12v7H4z" fill="#f2a922" /><path d="M6 12h2M9 12h2M12 12h2" stroke="#4a3000" strokeWidth="1.500" /></svg>
            <svg width="16" height="16" viewBox="0 0 16 16" aria-hidden="true"><path d="M3 13a4 4 0 0 1 0-8c2-4 8-4 10 0a4.500 4.500 0 0 1 0 8z" fill="#d6dbe0" /><circle cx="5.500" cy="9" r="2.500" fill="none" stroke="#555" strokeWidth="1.300" /><circle cx="10" cy="8" r="3" fill="none" stroke="#555" strokeWidth="1.300" /></svg>
            <svg width="16" height="17" viewBox="0 0 16 17" aria-hidden="true"><ellipse cx="7" cy="9" rx="6" ry="6.500" fill="#111" /><circle cx="7" cy="4" r="4" fill="#111" /><ellipse cx="7" cy="11" rx="3.500" ry="4" fill="#fff" /><path d="M2 8h10v2H2z" fill="#d9291c" /><path d="M5 4h1.500v2H5zM8 4h1.500v2H8z" fill="#fff" /><path d="M5 6h4v1.500H5z" fill="#f5a623" /><path d="M8 9h8v6H8z" fill="#f2a922" /><path d="M2 15h5v2H2z" fill="#f5a623" /></svg>
            <svg width="16" height="17" viewBox="0 0 16 17" aria-hidden="true"><path d="M8 1l7 2c0 7-2 11-7 13C3 14 1 10 1 3z" fill="#3fa535" stroke="#e8f5e2" strokeWidth="1.500" /><path d="M9 4L5 9h3l-1 4 4-5H8z" fill="#fff" /></svg>
            <svg width="16" height="16" viewBox="0 0 16 16" aria-hidden="true"><circle cx="8" cy="8" r="7.500" fill="#e7dc1e" /><path d="M8 .5a7.500 7.500 0 0 1 0 15c4-4 4-11 0-15z" fill="#54ad2e" /><path d="M8 4v8M4 8h8" stroke="#15702a" strokeWidth="2.500" /></svg>
            <svg width="16" height="16" viewBox="0 0 16 16" aria-hidden="true"><circle cx="7" cy="8" r="6.500" fill="#39a0ea" stroke="#e6f3fc" strokeWidth="1.500" /><path d="M12 5l4-2v10l-4-2z" fill="#e6f3fc" /><path d="M3 7c1-3 5-4 7-2" stroke="#fff" fill="none" /></svg>
            <svg width="16" height="16" viewBox="0 0 16 16" aria-hidden="true"><path d="M3 3l5-2 7 3-4 4-7-1z" fill="#eee" stroke="#333" /><path d="M1 12l8-4 4 2-2 5-6-1z" fill="#ccc" stroke="#333" /><path d="M1 8l3 5" stroke="#d63c8a" strokeWidth="1.500" /><path d="M10 8l4 4" stroke="#3fa535" strokeWidth="2" /></svg>
            <svg width="16" height="16" viewBox="0 0 16 16" fill="none" stroke="#fff" aria-hidden="true"><path d="M5.500 4.500h9v8h-9zM7 15.500h6M10 12.500v3M1 1v4c0 2 3 2 3 0V1M2.500 7v7h3" /></svg>
            <svg width="16" height="16" viewBox="0 0 16 16" aria-hidden="true"><path d="M5 6h2l4-5v14l-4-5H5z" fill="#fff" /></svg>
          </div>
          <div className="mr-px ml-2 w-[76px] text-center text-xs leading-[18px]">12:17<br />2020/9/23</div>
          <div className="h-[38px] w-[13px] rounded-[2px] border border-[#8ba5c4]/70 bg-white/15" />
        </div>
      </div>
    </div>
  );
}

function RecorderBar() {
  return (
    <div className="absolute top-[933px] left-[737px] flex h-[49px] w-[447px] items-center bg-white pl-3 text-[#333] shadow-[0_0_6px_#bbb]">
      <button aria-label="暂停" className="mr-[13px]"><Icon w={34} h={34} box="0 0 34 34" sw={1.5}><circle cx="17" cy="17" r="16" stroke="#111" /><path d="M14 11v12M20 11v12" strokeWidth="2.500" /></Icon></button>
      <button aria-label="停止" className="mr-[15px]"><Icon w={34} h={34} box="0 0 34 34" sw={1.5}><circle cx="17" cy="17" r="16" stroke="#111" /><path d="M11.500 11.500h11v11h-11z" fill="#f94144" stroke="none" /></Icon></button>
      <span className="flex h-[46px] w-[101px] items-center justify-center border-x border-[#f2f2f2] text-base">00:03:25</span>
      <svg width="8" height="20" className="mr-[19px] ml-[21px]" aria-hidden="true">
        <path d="M1 0v20M4 0v20M7 0v20" stroke="#b9cde0" strokeWidth="2" strokeDasharray="2 1" />
      </svg>
      <button aria-label="扬声器" className="mr-[14px]"><Icon w={22} h={18} box="0 0 22 18" sw={2}><path d="M1 5h4l5-4v16l-5-4H1z" fill="currentColor" stroke="none" /><path d="M13 5c2 2 2 6 0 8M16 2c5 4 5 10 0 14" /></Icon></button>
      <button aria-label="麦克风" className="mr-[18px]"><Icon w={18} h={18}><path d="M8 3c3-4 11 1 8 6-2 3-5 2-7 0S6 5 8 3zM7 8l3 3-8 6-2-1z" fill="currentColor" stroke="none" /><path d="M9 3l6 6" stroke="#fff" strokeWidth=".8" /></Icon></button>
      <button aria-label="摄像头" className="mr-4 flex items-center gap-1">
        <Icon w={18} h={19}><circle cx="9" cy="8" r="6.500" fill="currentColor" stroke="none" /><circle cx="9" cy="8" r="2.500" stroke="#fff" /><path d="M5 17h8l-2-3H7z" fill="currentColor" stroke="none" /><path d="M2 1l14 17" stroke="#fff" strokeWidth="3" /><path d="M2 1l14 17" strokeWidth="1.600" /></Icon>
        <svg width="5" height="4" aria-hidden="true"><path d="M0 0h5L2.500 4z" fill="#333" /></svg>
      </button>
      <button aria-label="画笔" className="mr-[18px]"><Icon w={21} h={18} box="0 0 21 18"><path d="M16 0l1 1-7 10-3-2zM6 10l3 3c-2 4-5 4-9 4 3-2 2-5 6-7z" fill="currentColor" stroke="none" /><path d="M11 16c3-1 5-4 3-4s-2 5 0 4 3-1 6 0" strokeWidth="1.500" /></Icon></button>
      <button aria-label="收起"><Icon w={13} h={4} box="0 0 13 4" sw={3}><path d="M0 2h13" /></Icon></button>
    </div>
  );
}

function ImeBar() {
  return (
    <div className="absolute top-[114px] left-[1365px] h-[39px] w-[104px] rounded bg-[#076307] text-xs text-white">
      <div className="flex h-5 items-center">
        <Icon w={16} h={10} box="0 0 16 10"><path d="M6 5l3-3 3 3M6 9l3-3 3 3" /></Icon>
        <span className="flex h-5 w-[54px] items-center justify-center border border-[#0b4a0b] bg-linear-to-r from-[#0d5f0d] to-[#188a18] pr-[3px]">英文</span>
        <svg width="24" height="10" viewBox="0 0 24 10" className="ml-[5px]" fill="#fff" aria-hidden="true"><path d="M4 0c5 1 5 9-3 9C4 7 5 4 4 0z" /><circle cx="15" cy="4" r="1.500" /><circle cx="20" cy="3.500" r="1.800" /><path d="M21.500 4l-2 4-.5-1 1-3z" /></svg>
      </div>
      <div className="flex h-[18px] items-center gap-[6px] pl-[6px]">
        <svg width="13" height="13" viewBox="0 0 13 13" fill="#fff" aria-hidden="true"><path d="M4 12L0 6l1-1 3 2L2 2l1-.5L5 5l0-5h1l1 5 2-4 1 .5L9 6l3-2 1 1-3 5-1 3z" /></svg>
        <Icon w={15} h={13} box="0 0 15 13" sw={1.8}><circle cx="5" cy="5" r="3.800" /><path d="M8 8l6 4" strokeWidth="2.500" /></Icon>
        <span className="leading-4">简</span>
        <span className="font-['Liberation_Mono',monospace] leading-4">GB</span>
        <svg width="18" height="11" aria-hidden="true"><path d="M0 0h18v11H0z" fill="none" stroke="#2d8a2d" /><path d="M2 3h14M2 6h14M2 9h14" stroke="#2d8a2d" strokeDasharray="1 1" /></svg>
      </div>
    </div>
  );
}

export default function App() {
  return (
    <div className="relative flex h-screen w-full flex-col overflow-hidden bg-[#e7e7e7] font-['Noto_Sans','Noto_Sans_CJK_SC',sans-serif]">
      <TopTabs />
      <MenuBar />
      <Ribbon />
      <main className="flex min-h-0 flex-1">
        <div className="flex min-w-0 flex-1 flex-col">
          <FormulaBar />
          <GridArea />
          <SheetTabs />
        </div>
        <SidePanel />
      </main>
      <StatusBar />
      <Taskbar />

      <div className="absolute top-[2px] left-[1283px] flex h-2 w-[57px] overflow-hidden rounded-full bg-[#5b605d]">
        <span className="w-[26px] bg-[repeating-linear-gradient(90deg,#4fae68_0_2px,#3f6e4a_2px_3px)]" />
      </div>
      <ImeBar />
      <div className="pointer-events-none absolute top-[175px] left-[606px] flex size-[48px] items-center justify-center rounded-full bg-[#ff8f8f]/60">
        <svg width="16" height="16" viewBox="0 0 16 16" aria-hidden="true"><path d="M5.500 1h5v4.500H15v5h-4.500V15h-5v-4.500H1v-5h4.500z" fill="#fff" stroke="#000" strokeWidth="1.500" /></svg>
      </div>
      <RecorderBar />
    </div>
  );
}
